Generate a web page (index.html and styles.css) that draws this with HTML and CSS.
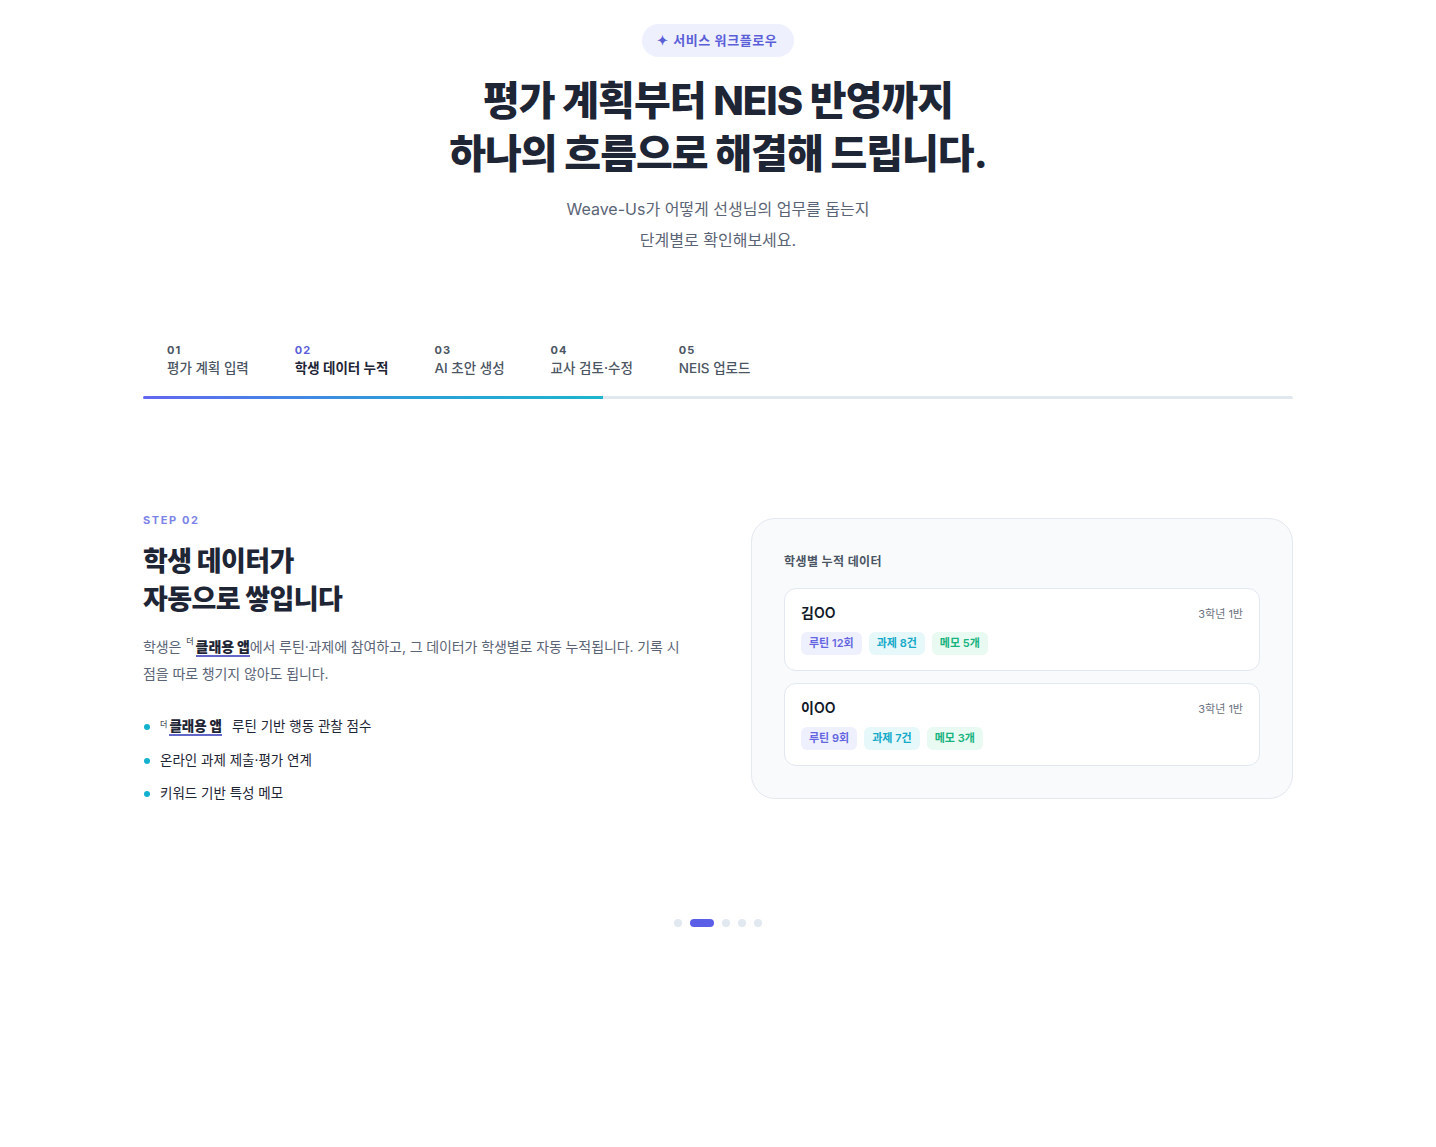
FILE: index.html
```html
<!DOCTYPE html>
<html lang="ko">
<head>
<meta charset="utf-8">
<title>서비스 워크플로우</title>
<link rel="stylesheet" href="styles.css">
</head>
<body>
<main class="page">
  <header class="hero">
    <span class="badge"><span class="badge-star">✦</span>서비스 워크플로우</span>
    <h1 class="hero-title">평가 계획부터 NEIS 반영까지<br>하나의 흐름으로 해결해 드립니다.</h1>
    <p class="hero-sub">Weave-Us가 어떻게 선생님의 업무를 돕는지<br>단계별로 확인해보세요.</p>
  </header>

  <nav class="tabs">
    <div class="tab-list">
      <div class="tab"><span class="tab-num">01</span><span class="tab-label">평가 계획 입력</span></div>
      <div class="tab active"><span class="tab-num">02</span><span class="tab-label">학생 데이터 누적</span></div>
      <div class="tab"><span class="tab-num">03</span><span class="tab-label">AI 초안 생성</span></div>
      <div class="tab"><span class="tab-num">04</span><span class="tab-label">교사 검토·수정</span></div>
      <div class="tab"><span class="tab-num">05</span><span class="tab-label">NEIS 업로드</span></div>
    </div>
    <div class="track"><div class="track-fill" style="width:40%"></div></div>
  </nav>

  <section class="step">
    <div class="step-text">
      <div class="step-label">STEP 02</div>
      <h2 class="step-title">학생 데이터가<br>자동으로 쌓입니다</h2>
      <p class="step-desc"><span>학생은</span><span class="brand"><span class="brand-pre">더</span><b class="brand-name">클래용 앱</b></span><span>에서 루틴·과제에 참여하고, 그 데이터가 학생별로 자동 누적됩니다. 기록 시</span><span>점을 따로 챙기지 않아도 됩니다.</span></p>
      <ul class="points">
        <li><span class="brand brand-first"><span class="brand-pre">더</span><b class="brand-name">클래용 앱</b></span><span class="point-rest">루틴 기반 행동 관찰 점수</span></li>
        <li>온라인 과제 제출·평가 연계</li>
        <li>키워드 기반 특성 메모</li>
      </ul>
    </div>

    <div class="panel">
      <div class="panel-title">학생별 누적 데이터</div>
      <div class="student">
        <div class="student-head"><span class="student-name">김OO</span><span class="student-class">3학년 1반</span></div>
        <div class="chips">
          <span class="chip chip-purple">루틴 12회</span>
          <span class="chip chip-cyan">과제 8건</span>
          <span class="chip chip-green">메모 5개</span>
        </div>
      </div>
      <div class="student">
        <div class="student-head"><span class="student-name">이OO</span><span class="student-class">3학년 1반</span></div>
        <div class="chips">
          <span class="chip chip-purple">루틴 9회</span>
          <span class="chip chip-cyan">과제 7건</span>
          <span class="chip chip-green">메모 3개</span>
        </div>
      </div>
    </div>
  </section>

  <div class="dots">
    <span class="dot"></span>
    <span class="dot active"></span>
    <span class="dot"></span>
    <span class="dot"></span>
    <span class="dot"></span>
  </div>
</main>
</body>
</html>
```

FILE: styles.css
```css
* { box-sizing: border-box; }
html, body { margin: 0; padding: 0; background: #ffffff; }
body {
  font-family: "Inter", "Noto Sans CJK KR", sans-serif;
  color: #1e2535;
  -webkit-font-smoothing: antialiased;
}
.page {
  width: 1150px;
  margin: 0 auto;
  padding-top: 24px;
}
.hero {
  display: flex;
  flex-direction: column;
  align-items: center;
  text-align: center;
}
.badge {
  display: inline-flex;
  align-items: center;
  gap: 5px;
  height: 33px;
  padding: 0 17px 0 15px;
  border-radius: 999px;
  background: #eef0fe;
  color: #5b5fd8;
  font-size: 13px;
  font-weight: 700;
  letter-spacing: 0.6px;
  line-height: 1;
}
.badge-star { font-size: 13px; }
.hero-title {
  margin: 17px 0 0;
  font-size: 40px;
  line-height: 53px;
  font-weight: 800;
  letter-spacing: -1px;
  color: #1e2535;
}
.hero-sub {
  margin: 14px 0 0;
  font-size: 16px;
  line-height: 31px;
  color: #5b6475;
  font-weight: 400;
}

.tabs { margin-top: 87px; }
.tab-list { display: flex; }
.tab {
  display: flex;
  flex-direction: column;
  padding: 0 23px 18px 24px;
}
.tab + .tab { padding-left: 23px; }
.tab-num {
  font-size: 11px;
  font-weight: 700;
  letter-spacing: 1px;
  color: #4b5563;
  line-height: 14px;
}
.tab-label {
  margin-top: 1px;
  font-size: 13.5px;
  line-height: 20px;
  color: #4b5563;
  font-weight: 500;
}
.tab.active .tab-num { color: #5b5fd8; }
.tab.active .tab-label { color: #1e2535; font-weight: 600; }
.track {
  height: 3px;
  background: #e2e8f0;
  border-radius: 2px;
  overflow: hidden;
}
.track-fill {
  height: 100%;
  background: linear-gradient(90deg, #6366f1 0%, #2aa0d8 60%, #1cb5cc 100%);
}

.step {
  display: grid;
  grid-template-columns: 1fr 542px;
  gap: 66px;
  align-items: start;
  margin-top: 114px;
}
.step-label {
  font-size: 11px;
  font-weight: 700;
  letter-spacing: 1.6px;
  color: #7c83e8;
  line-height: 14px;
}
.step-title {
  margin: 16px 0 0;
  font-size: 27px;
  line-height: 38px;
  font-weight: 800;
  letter-spacing: -0.6px;
  color: #1e2535;
}
.step-desc {
  margin: 14px 0 0;
  font-size: 14px;
  line-height: 27px;
  letter-spacing: -0.1px;
  color: #5b6475;
}
.brand { white-space: nowrap; margin-left: 5px; }
.brand-first { margin-left: 0; }
.brand-pre {
  display: inline-block;
  font-size: 8px;
  line-height: 8px;
  vertical-align: top;
  margin: 4px 2px 0 0;
  color: #4b5563;
  font-weight: 500;
}
.brand-name {
  font-weight: 800;
  color: #1e2535;
  border-bottom: 2px solid #6366c9;
}
.points {
  list-style: none;
  margin: 29px 0 0;
  padding: 0;
}
.points li {
  position: relative;
  padding-left: 17px;
  font-size: 13.5px;
  line-height: 20px;
  color: #1e2535;
  margin-bottom: 13.5px;
}
.points li:last-child { margin-bottom: 0; }
.point-rest { margin-left: 10px; }
.points li::before {
  content: "";
  position: absolute;
  left: 1px;
  top: 8px;
  width: 6px;
  height: 6px;
  border-radius: 50%;
  background: #13b1cf;
}

.panel {
  margin-top: 5px;
  background: #f8fafc;
  border: 1px solid #e4e8ef;
  border-radius: 24px;
  padding: 32px 32px 32px;
}
.panel-title {
  font-size: 12px;
  font-weight: 700;
  color: #4b5563;
  letter-spacing: 0.4px;
  line-height: 18px;
  margin-top: 2px;
  margin-bottom: 17px;
}
.student {
  background: #ffffff;
  border: 1px solid #e2e8f0;
  border-radius: 12px;
  padding: 14px 16px 15px;
  margin-bottom: 12px;
}
.student:last-child { margin-bottom: 0; }
.student-head {
  display: flex;
  justify-content: space-between;
  align-items: center;
}
.student-name {
  font-size: 14px;
  font-weight: 600;
  color: #111827;
  line-height: 20px;
}
.student-class {
  font-size: 11px;
  color: #6b7280;
}
.chips {
  display: flex;
  gap: 7px;
  margin-top: 9px;
}
.chip {
  font-size: 11px;
  font-weight: 600;
  line-height: 23px;
  height: 23px;
  padding: 0 8px;
  border-radius: 6px;
}
.chip-purple { background: #eff0fe; color: #6366e0; }
.chip-cyan { background: #e7f8fb; color: #12a9c9; }
.chip-green { background: #e8faf1; color: #16b37e; }

.dots {
  display: flex;
  justify-content: center;
  align-items: center;
  gap: 8px;
  margin-top: 116px;
  padding-bottom: 200px;
}
.dot {
  width: 8px;
  height: 8px;
  border-radius: 4px;
  background: #e2e8f0;
}
.dot.active {
  width: 24px;
  background: #5b5fe8;
}
```
